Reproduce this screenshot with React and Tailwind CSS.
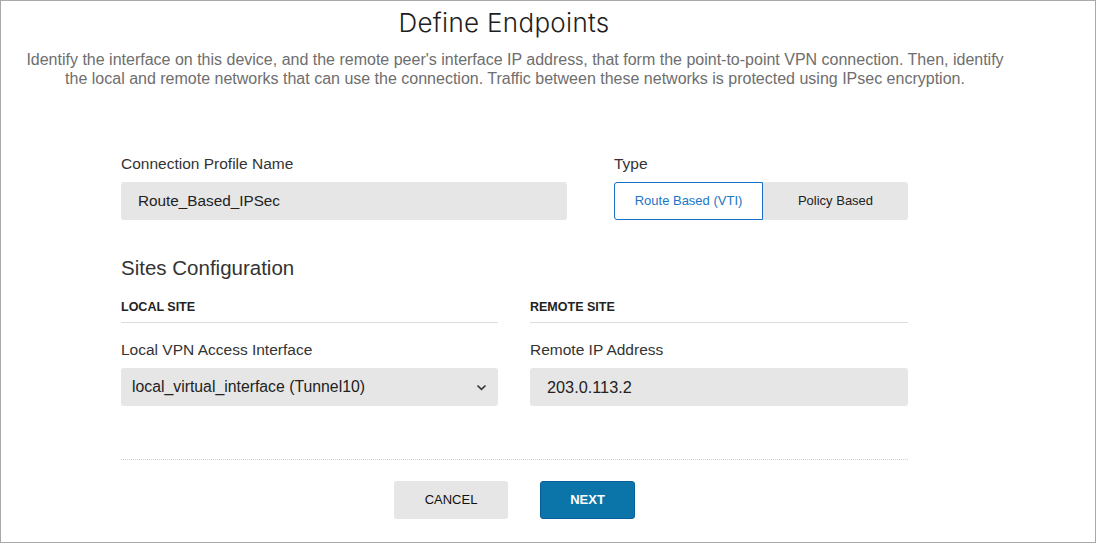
export default function App() {
  const font = { fontFamily: '"Liberation Sans", Arial, sans-serif' };
  return (
    <div
      className="w-[1096px] h-[543px] bg-white border border-[#a9a9a9] overflow-hidden text-[#222]"
      style={font}
    >
      <div className="w-[1028px] flex flex-col items-center">
        <h1
          className="mt-[7px] mr-[22px] text-[26px] leading-[30px] font-light text-[#1e1e1e] tracking-[0.3px]"
          style={{ fontFamily: 'Inter, "Liberation Sans", sans-serif' }}
        >
          Define Endpoints
        </h1>
        <p className="mt-[12px] text-[16px] leading-[19px] text-[#6e6e6e] text-center w-[1020px]">
          Identify the interface on this device, and the remote peer's interface IP address, that form the point-to-point VPN connection. Then, identify
          <br />
          the local and remote networks that can use the connection. Traffic between these networks is protected using IPsec encryption.
        </p>
      </div>

      <div className="ml-[120px] w-[787px] mt-[67px]">
        <div className="flex">
          <div className="w-[446px] flex flex-col">
            <label className="text-[15.5px] leading-[18px] text-[#333]">Connection Profile Name</label>
            <div className="mt-[9px] h-[38px] rounded-[3px] bg-[#e6e6e6] flex items-center pl-[17px] text-[15.3px] text-[#222]">
              Route_Based_IPSec
            </div>
          </div>
          <div className="ml-[47px] flex flex-col">
            <label className="text-[15.5px] leading-[18px] text-[#333]">Type</label>
            <div className="mt-[9px] flex h-[38px]">
              <div className="w-[149px] border border-[#1770c4] rounded-l-[3px] flex items-center justify-center text-[13px] text-[#1b76c6] bg-white">
                Route Based (VTI)
              </div>
              <div className="w-[145px] bg-[#e6e6e6] rounded-r-[3px] flex items-center justify-center text-[13px] text-[#222]">
                Policy Based
              </div>
            </div>
          </div>
        </div>

        <h2 className="mt-[36px] text-[20.5px] leading-[24px] text-[#333]">Sites Configuration</h2>

        <div className="mt-[19px] flex gap-[32px]">
          <div className="w-[377px] flex flex-col">
            <div className="text-[12.5px] leading-[16px] font-bold text-[#222] pb-[7px] border-b border-[#dcdcdc]">
              LOCAL SITE
            </div>
            <label className="mt-[18px] text-[15.5px] leading-[18px] text-[#333]">Local VPN Access Interface</label>
            <div className="mt-[9px] h-[38px] rounded-[3px] bg-[#e6e6e6] flex items-center justify-between pl-[11px] pr-[11px] text-[15.8px] text-[#222]">
              <span>local_virtual_interface (Tunnel10)</span>
              <svg width="11" height="7" viewBox="0 0 11 7" fill="none">
                <path d="M1.5 1.5 L5.5 5.3 L9.5 1.5" stroke="#333" strokeWidth="1.6" />
              </svg>
            </div>
          </div>
          <div className="w-[378px] flex flex-col">
            <div className="text-[12.5px] leading-[16px] font-bold text-[#222] pb-[7px] border-b border-[#dcdcdc]">
              REMOTE SITE
            </div>
            <label className="mt-[18px] text-[15.5px] leading-[18px] text-[#333]">Remote IP Address</label>
            <div className="mt-[9px] h-[38px] rounded-[3px] bg-[#e6e6e6] flex items-center pl-[17px] text-[16.3px] text-[#222]">
              203.0.113.2
            </div>
          </div>
        </div>

        <div className="mt-[53px] border-t border-dotted border-[#d0d0d0]" />

        <div className="mt-[21px] flex justify-center gap-[32px]">
          <button className="w-[114px] h-[38px] rounded-[3px] bg-[#e6e6e6] text-[13px] text-[#111]">
            CANCEL
          </button>
          <button className="w-[95px] h-[38px] rounded-[3px] bg-[#0b74a8] border border-[#08609a] text-[13px] font-bold text-white">
            NEXT
          </button>
        </div>
      </div>
    </div>
  );
}
